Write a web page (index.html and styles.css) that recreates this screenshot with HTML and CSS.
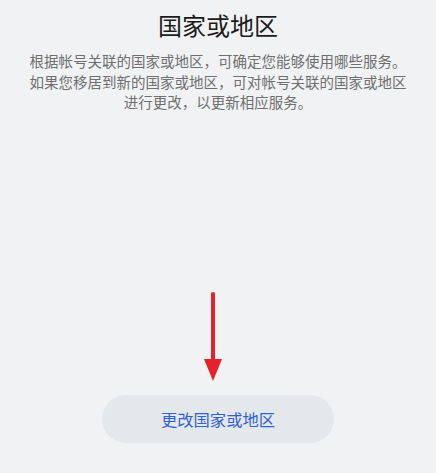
FILE: index.html
```html
<!DOCTYPE html>
<html lang="zh-CN">
<head>
  <meta charset="UTF-8" />
  <meta name="viewport" content="width=device-width, initial-scale=1" />
  <title>国家或地区</title>
  <link rel="stylesheet" href="styles.css">
</head>
<body>
  <div class="page">
    <h1 class="title">国家或地区</h1>
    <p class="desc">根据帐号关联的国家或地区，可确定您能够使用哪些服务。<br>如果您移居到新的国家或地区，可对帐号关联的国家或地区<br>进行更改，以更新相应服务。</p>

    <div class="bottom">
      <svg class="arrow" width="20" height="90" viewBox="0 0 20 90">
        <line x1="10" y1="3" x2="10" y2="72" stroke="#e8202a" stroke-width="4" stroke-linecap="round" />
        <polygon points="1,68 19,68 10,90" fill="#e8202a" />
      </svg>
      <button class="change-btn" type="button">更改国家或地区</button>
    </div>
  </div>
</body>
</html>
```

FILE: styles.css
```css
body {
  margin: 0;
  background-color: #f1f2f4;
  font-family: "Noto Sans CJK SC", "Noto Sans", sans-serif;
  height: 100vh;
  overflow: hidden;
}

.page {
  height: 473px;
  display: flex;
  flex-direction: column;
  align-items: center;
}

.title {
  margin: 7px 0 0;
  font-size: 24px;
  font-weight: normal;
  line-height: 36px;
  color: #1b1b1b;
}

.desc {
  margin: 8px 0 0;
  font-size: 14.5px;
  line-height: 20.5px;
  color: #6f6f6f;
  text-align: center;
}

.bottom {
  margin-top: auto;
  margin-bottom: 30px;
  display: flex;
  flex-direction: column;
  align-items: center;
}

.arrow {
  display: block;
  margin-left: -10px; /* pil sitter lite till vänster om mitten */
}

.change-btn {
  margin-top: 14px;
  width: 232px;
  height: 48px;
  border: none;
  border-radius: 24px;
  background: #e5e8ea;
  color: #2f5fd8;
  font-family: "Noto Sans CJK SC", "Noto Sans", sans-serif;
  font-size: 16.3px;
  padding: 0;
  cursor: pointer;
}
```
